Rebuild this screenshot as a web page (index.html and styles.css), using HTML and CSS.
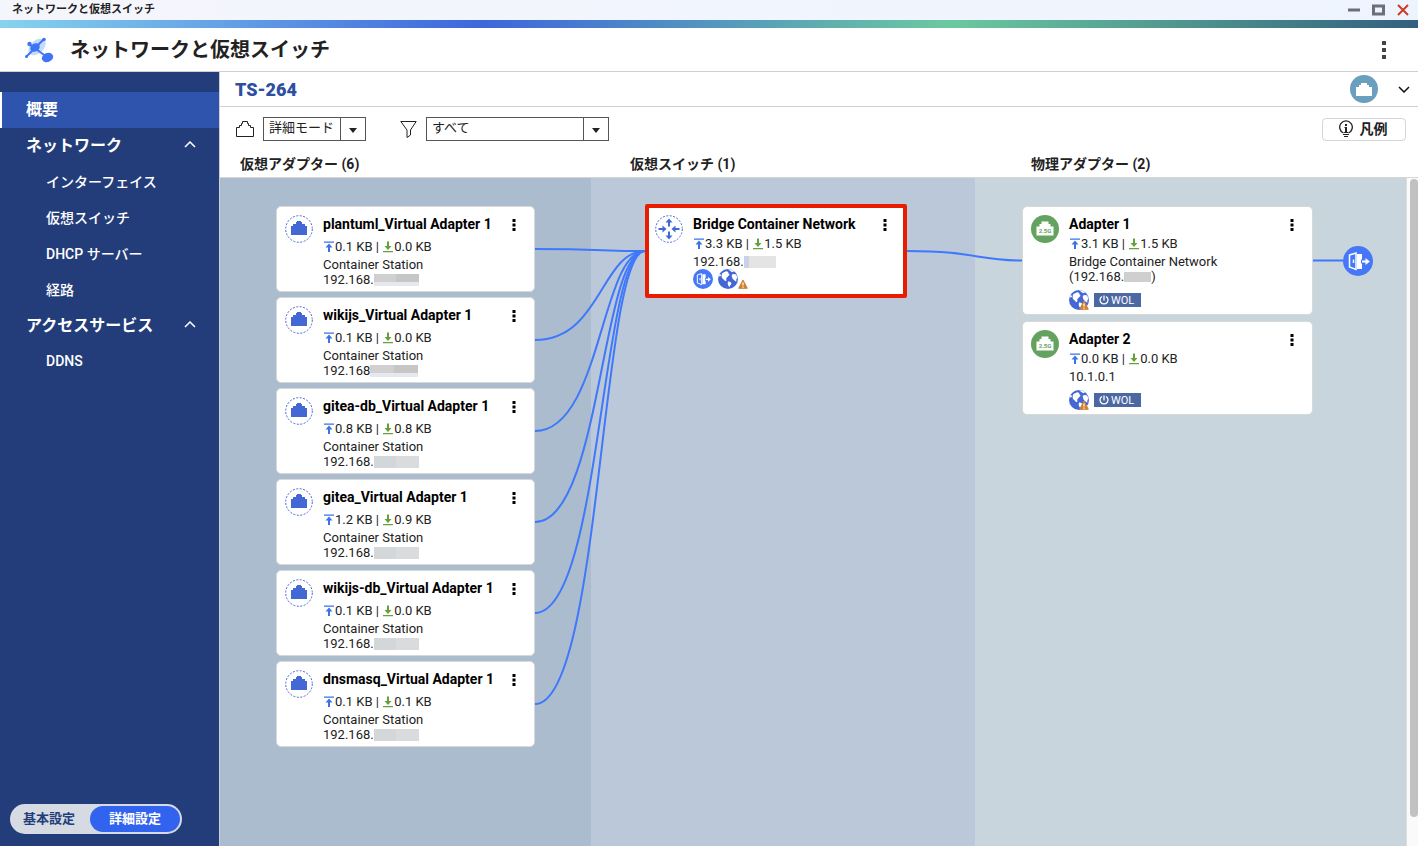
FILE: index.html
```html
<!DOCTYPE html>
<html lang="ja">
<head>
    <meta charset="UTF-8">
    <meta name="viewport" content="width=device-width, initial-scale=1.0">
    <title>ネットワークと仮想スイッチ</title>
    <link rel="stylesheet" href="styles.css">
</head>
<body>
    <svg class="sprite" aria-hidden="true">
        <symbol id="port" viewBox="0 0 18 15"><path d="M1 14V5h3V3h2V1h6v2h2v2h3v9z"/></symbol>
        <symbol id="virtual" viewBox="0 0 28 28">
            <circle cx="14" cy="14" r="13.3" fill="none" stroke="#4467d6" stroke-dasharray="2 1.5"/>
            <path d="M6 20v-9h2V9h3V7h1V6h4v1h1v2h3v2h2v9z" fill="#4467d6"/>
        </symbol>
        <symbol id="switch" viewBox="0 0 28 28">
            <circle cx="14" cy="14" r="13.3" fill="none" stroke="#4467d6" stroke-dasharray="2 1.5"/>
            <g fill="#4467d6">
                <path d="M14 3.500l3.500 4H15V11.500h-2V7.500h-2.500z"/>
                <path d="M14 24.500l3.500-4H15V16.500h-2v4h-2.500z"/>
                <path d="M11.500 14L7.500 10.500V13h-4v2h4v2.500z"/>
                <path d="M16.500 14l4-3.500V13h4v2h-4v2.500z"/>
            </g>
        </symbol>
        <symbol id="physical" viewBox="0 0 28 28">
            <circle cx="14" cy="14" r="14" fill="#64a35f"/>
            <path d="M5.500 20.500v-9h3v-2.500h2V6.500h7V9h2v2.500h3v9z" fill="#fff"/>
            <text x="14" y="18" text-anchor="middle" class="speed">2.5G</text>
        </symbol>
        <symbol id="up" viewBox="0 0 12 12"><path d="M1 .5h10v1.300H1z M6 2.500L9.500 6.500H7V11H5V6.500H2.500z" fill="#3a72e8"/></symbol>
        <symbol id="down" viewBox="0 0 12 12"><path d="M1 10h10v1.300H1z M6 9L9.500 5H7V.5H5V5H2.500z" fill="#64a03c"/></symbol>
        <symbol id="dots" viewBox="0 0 4 12"><path d="M.5 0h3v3h-3z M.5 4.500h3v3h-3z M.5 9h3v3h-3z"/></symbol>
        <symbol id="gateway" viewBox="0 0 30 30">
            <circle cx="15" cy="15" r="15" fill="#4577f8"/>
            <path d="M6.500 9L13 7v16.500L6.500 21z" fill="none" stroke="#fff" stroke-width="1.500"/>
            <path d="M10.500 13.500v3.500" stroke="#fff" stroke-width="1.500"/>
            <path d="M14 8h5v5.500h-1v4h1V23h-5z" fill="#fff"/>
            <path d="M19 14.600h3.500V12l4.300 3.500-4.300 3.500v-2.600H19z" fill="#fff"/>
        </symbol>
        <symbol id="globe" viewBox="0 0 20 20">
            <circle cx="10" cy="10" r="10" fill="#4467d6"/>
            <path d="M4 4.500C5.500 3 6.500 3.200 7.500 2.500 9 2 10.500 3 10.500 4.500c1.500.5 1 2-.3 2.500C9.800 8.500 8.500 8 8.300 9.500 8 11 9 11.500 8 12 6.500 12.300 6 10.500 4.500 9.500 3.300 8.500 3.500 6.500 4 4.500z" fill="#fff"/>
            <path d="M10 .300c2.500 0 4.500.8 6 2.200l-1.800.7L12 1.800z M14 5.500c1.500-1 3-.5 4.200 0L19.500 9c-1.200.3-1.500 2-1 3.500-1.500 0-2-1.500-3.200-2-1-1.300-2-3.500-1.300-5z M10 12.500c1.500-.3 3 .5 3.500 2-.5 1.500-1.800 2-2 3.500-1.500-1-2.200-3.500-1.500-5.500z" fill="#fff"/>
            <path d="M.5 7.500L3 7l-.3-1.500L1.500 5z" fill="#fff"/>
        </symbol>
        <symbol id="warn" viewBox="0 0 10 10">
            <path d="M5 1L9.300 9.300H.7z" fill="#d08030" stroke="#d08030" stroke-linejoin="round"/>
            <path d="M5 3.500v3M5 7.500v1.200" stroke="#fff" stroke-width="1.200"/>
        </symbol>
        <symbol id="power" viewBox="0 0 10 10"><path d="M3 1.500a4 4 0 1 0 4 0M5 .5v5" fill="none" stroke="#fff" stroke-width="1.300"/></symbol>
    </svg>

    <div class="titlebar">
        <span>ネットワークと仮想スイッチ</span>
        <div class="window-buttons">
            <button aria-label="最小化"><svg width="12" height="12"><path d="M0 4.500h12v3H0z" fill="#6b6f7b"/></svg></button>
            <button aria-label="最大化"><svg width="13" height="12"><path d="M1.500 2h10v8h-10z" fill="none" stroke="#6b6f7b" stroke-width="3"/></svg></button>
            <button aria-label="閉じる"><svg width="12" height="12"><path d="M1 1l10 10M11 1L1 11" stroke="#cf3a26" stroke-width="2"/></svg></button>
        </div>
    </div>
    <div class="rainbow"></div>

    <header class="app-header">
        <svg class="logo" width="30" height="26" viewBox="0 0 30 26">
            <ellipse cx="13" cy="10" rx="10" ry="6.500" transform="rotate(-42 13 10)" fill="#c3dcfb"/>
            <path d="M2 20L20 2M5 7l18 13" stroke="#3f75f5" stroke-width="2"/>
            <ellipse cx="11" cy="10.500" rx="5" ry="4" transform="rotate(-30 11 10.500)" fill="#3f75f5"/>
            <circle cx="5.500" cy="7" r="2.200" fill="#3f75f5"/>
            <circle cx="20" cy="2.500" r="1.800" fill="#3f75f5"/>
            <circle cx="2.500" cy="19.500" r="1.500" fill="#3f75f5"/>
            <ellipse cx="23.500" cy="20.500" rx="5.800" ry="4.500" transform="rotate(-20 23.500 20.500)" fill="#3f75f5"/>
        </svg>
        <h1>ネットワークと仮想スイッチ</h1>
        <button class="app-menu" aria-label="メニュー"><svg width="4" height="18" viewBox="0 0 4 18"><path d="M0 0h4v4H0z M0 7h4v4H0z M0 14h4v4H0z"/></svg></button>
    </header>

    <div class="layout">
        <aside class="sidebar">
            <nav>
                <a class="group active" href="#">概要</a>
                <a class="group" href="#">ネットワーク<svg width="12" height="7"><path d="M1 6l5-5 5 5"/></svg></a>
                <a class="item" href="#">インターフェイス</a>
                <a class="item" href="#">仮想スイッチ</a>
                <a class="item" href="#">DHCP サーバー</a>
                <a class="item" href="#">経路</a>
                <a class="group" href="#">アクセスサービス<svg width="12" height="7"><path d="M1 6l5-5 5 5"/></svg></a>
                <a class="item" href="#">DDNS</a>
            </nav>
            <div class="mode">
                <button>基本設定</button>
                <button class="on">詳細設定</button>
            </div>
        </aside>

        <main>
            <div class="device">
                <h2>TS-264</h2>
                <span class="device-port"><svg width="18" height="15"><use href="#port"/></svg></span>
                <button aria-label="展開"><svg width="12" height="7"><path d="M1 1l5 5 5-5" fill="none" stroke="#111" stroke-width="1.500"/></svg></button>
            </div>

            <div class="toolbar">
                <label for="viewMode" aria-label="表示モード"><svg class="line-icon" width="18" height="17" viewBox="0 0 18 17"><path d="M.5 15.500v-9h3v-2h2v-2h1v-2h5v2h1v2h2v2h3v9z"/></svg></label>
                <div class="select select-mode">
                    <select id="viewMode"><option>詳細モード</option></select>
                </div>
                <label class="filter" for="filter" aria-label="フィルター"><svg class="line-icon" width="17" height="17" viewBox="0 0 17 17"><path d="M.8.500h15.400L10.500 9v5l-3.500 2.500V9z"/></svg></label>
                <div class="select select-filter">
                    <select id="filter"><option>すべて</option></select>
                </div>
                <button class="legend">
                    <svg width="14" height="18" viewBox="0 0 14 18">
                        <path d="M4.500 13A6.300 6.300 0 1 1 9.500 13" fill="none" stroke="#222" stroke-width="1.300"/>
                        <path d="M6 7h2v5h1v1H5v-1h1V8H5z M6 4h2v2H6z M4 14h6v1H4z M5 16h4v1H5z" fill="#222"/>
                    </svg>
                    <span>凡例</span>
                </button>
            </div>

            <div class="columns heads">
                <h3>仮想アダプター (6)</h3>
                <h3>仮想スイッチ (1)</h3>
                <h3>物理アダプター (2)</h3>
            </div>

            <div class="board">
                <div class="columns map" id="map">
                    <section class="col adapters">
                        <article class="card" data-to="bridge">
                            <svg class="badge"><use href="#virtual"/></svg>
                            <div class="info">
                                <h4>plantuml_Virtual Adapter 1</h4>
                                <p class="rate"><svg><use href="#up"/></svg>0.1 KB | <svg><use href="#down"/></svg>0.0 KB</p>
                                <p>Container Station</p>
                                <p>192.168.<span class="mask"></span></p>
                            </div>
                            <button class="more" aria-label="操作"><svg><use href="#dots"/></svg></button>
                        </article>
                        <article class="card" data-to="bridge">
                            <svg class="badge"><use href="#virtual"/></svg>
                            <div class="info">
                                <h4>wikijs_Virtual Adapter 1</h4>
                                <p class="rate"><svg><use href="#up"/></svg>0.1 KB | <svg><use href="#down"/></svg>0.0 KB</p>
                                <p>Container Station</p>
                                <p>192.168<span class="mask wide"></span></p>
                            </div>
                            <button class="more" aria-label="操作"><svg><use href="#dots"/></svg></button>
                        </article>
                        <article class="card" data-to="bridge">
                            <svg class="badge"><use href="#virtual"/></svg>
                            <div class="info">
                                <h4>gitea-db_Virtual Adapter 1</h4>
                                <p class="rate"><svg><use href="#up"/></svg>0.8 KB | <svg><use href="#down"/></svg>0.8 KB</p>
                                <p>Container Station</p>
                                <p>192.168.<span class="mask flat"></span></p>
                            </div>
                            <button class="more" aria-label="操作"><svg><use href="#dots"/></svg></button>
                        </article>
                        <article class="card" data-to="bridge">
                            <svg class="badge"><use href="#virtual"/></svg>
                            <div class="info">
                                <h4>gitea_Virtual Adapter 1</h4>
                                <p class="rate"><svg><use href="#up"/></svg>1.2 KB | <svg><use href="#down"/></svg>0.9 KB</p>
                                <p>Container Station</p>
                                <p>192.168.<span class="mask flat"></span></p>
                            </div>
                            <button class="more" aria-label="操作"><svg><use href="#dots"/></svg></button>
                        </article>
                        <article class="card" data-to="bridge">
                            <svg class="badge"><use href="#virtual"/></svg>
                            <div class="info">
                                <h4>wikijs-db_Virtual Adapter 1</h4>
                                <p class="rate"><svg><use href="#up"/></svg>0.1 KB | <svg><use href="#down"/></svg>0.0 KB</p>
                                <p>Container Station</p>
                                <p>192.168.<span class="mask flat"></span></p>
                            </div>
                            <button class="more" aria-label="操作"><svg><use href="#dots"/></svg></button>
                        </article>
                        <article class="card" data-to="bridge">
                            <svg class="badge"><use href="#virtual"/></svg>
                            <div class="info">
                                <h4>dnsmasq_Virtual Adapter 1</h4>
                                <p class="rate"><svg><use href="#up"/></svg>0.1 KB | <svg><use href="#down"/></svg>0.1 KB</p>
                                <p>Container Station</p>
                                <p>192.168.<span class="mask flat"></span></p>
                            </div>
                            <button class="more" aria-label="操作"><svg><use href="#dots"/></svg></button>
                        </article>
                    </section>

                    <section class="col switches">
                        <article class="card selected" id="bridge" data-to="adapter1">
                            <svg class="badge"><use href="#switch"/></svg>
                            <div class="info">
                                <h4>Bridge Container Network</h4>
                                <p class="rate"><svg><use href="#up"/></svg>3.3 KB | <svg><use href="#down"/></svg>1.5 KB</p>
                                <p>192.168.<span class="mask pale"></span></p>
                                <div class="status">
                                    <svg class="round"><use href="#gateway"/></svg>
                                    <svg class="round"><use href="#globe"/></svg>
                                    <svg class="warn"><use href="#warn"/></svg>
                                </div>
                            </div>
                            <button class="more" aria-label="操作"><svg><use href="#dots"/></svg></button>
                        </article>
                    </section>

                    <section class="col physical">
                        <div class="row">
                            <article class="card" id="adapter1" data-to="gateway1">
                                <svg class="badge"><use href="#physical"/></svg>
                                <div class="info">
                                    <h4>Adapter 1</h4>
                                    <p class="rate"><svg><use href="#up"/></svg>3.1 KB | <svg><use href="#down"/></svg>1.5 KB</p>
                                    <p>Bridge Container Network</p>
                                    <p>(192.168.<span class="mask short"></span>)</p>
                                    <div class="status">
                                        <span class="net"><svg class="round"><use href="#globe"/></svg><svg class="warn"><use href="#warn"/></svg></span>
                                        <span class="wol"><svg><use href="#power"/></svg>WOL</span>
                                    </div>
                                </div>
                                <button class="more" aria-label="操作"><svg><use href="#dots"/></svg></button>
                            </article>
                            <svg class="gateway" id="gateway1"><use href="#gateway"/></svg>
                        </div>
                        <div class="row">
                            <article class="card">
                                <svg class="badge"><use href="#physical"/></svg>
                                <div class="info">
                                    <h4>Adapter 2</h4>
                                    <p class="rate"><svg><use href="#up"/></svg>0.0 KB | <svg><use href="#down"/></svg>0.0 KB</p>
                                    <p>10.1.0.1</p>
                                    <div class="status">
                                        <span class="net"><svg class="round"><use href="#globe"/></svg><svg class="warn"><use href="#warn"/></svg></span>
                                        <span class="wol"><svg><use href="#power"/></svg>WOL</span>
                                    </div>
                                </div>
                                <button class="more" aria-label="操作"><svg><use href="#dots"/></svg></button>
                            </article>
                        </div>
                    </section>
                    <svg class="wires" id="wires"></svg>
                </div>
                <div class="scrollbar"><div class="thumb"></div></div>
            </div>
        </main>
    </div>

    <script>
        const map = document.getElementById('map');
        const wires = document.getElementById('wires');

        // Connect every card to the element named in its data-to attribute
        function drawWires() {
            const base = map.getBoundingClientRect();
            let paths = '';
            map.querySelectorAll('[data-to]').forEach(card => {
                const a = card.getBoundingClientRect();
                const b = document.getElementById(card.dataset.to).getBoundingClientRect();
                const x1 = a.right - base.left;
                const y1 = a.top + a.height / 2 - base.top;
                const x2 = b.left - base.left;
                const y2 = b.top + b.height / 2 - base.top;
                const bend = x1 + (x2 - x1) * 0.6;
                paths += `<path d="M${x1} ${y1}C${bend} ${y1} ${bend} ${y2} ${x2} ${y2}"/>`;
            });
            wires.innerHTML = paths;
        }

        drawWires();
        window.addEventListener('resize', drawWires);
    </script>
</body>
</html>
```

FILE: styles.css
```css
* {
    box-sizing: border-box;
}

body {
    margin: 0;
    height: 100vh;
    display: flex;
    flex-direction: column;
    font-family: Roboto, "Noto Sans CJK JP", sans-serif;
    font-size: 13px;
    color: #222;
    background: #fff;
    overflow: hidden;
}

h1, h2, h3, h4, p {
    margin: 0;
}

button {
    padding: 0;
    border: none;
    background: none;
    font: inherit;
    color: inherit;
    cursor: pointer;
}

svg {
    display: block;
    flex: none;
}

a {
    color: inherit;
    text-decoration: none;
}

.sprite {
    display: none;
}

/* Window frame */
.titlebar {
    flex: none;
    display: flex;
    justify-content: space-between;
    align-items: center;
    height: 20px;
    padding: 0 9px 0 12px;
    background: linear-gradient(90deg, #f5f6fc, #eef4fe);
    font-size: 11px;
    font-weight: 700;
    line-height: 18px;
}

.window-buttons {
    display: flex;
    gap: 12px;
}

.rainbow {
    flex: none;
    height: 8px;
    background: linear-gradient(90deg, #86d3ee, #3d66dc 34%, #6bc99f 67%, #33607f);
}

.app-header {
    flex: none;
    display: flex;
    align-items: center;
    height: 44px;
    padding: 1px 32px 0 24px;
    border-bottom: 1px solid #d0d0d2;
}

.app-header h1 {
    margin-left: 16px;
    font-size: 20px;
    font-weight: 700;
    line-height: 28px;
}

.app-menu {
    margin-left: auto;
    fill: #444;
}

.layout {
    flex: 1;
    display: flex;
    min-height: 0;
}

/* Sidebar */
.sidebar {
    flex: none;
    display: flex;
    flex-direction: column;
    justify-content: space-between;
    width: 220px;
    padding: 20px 0 12px;
    border-right: 1px solid #d0d0d2;
    background: #233d7a;
    color: #fff;
}

.sidebar a {
    display: flex;
    align-items: center;
    justify-content: space-between;
    height: 36px;
    font-size: 14px;
}

.sidebar .group {
    padding: 0 23px 4px 26px;
    font-size: 16px;
    font-weight: 700;
}

.sidebar .item {
    padding: 0 0 2px 46px;
    font-weight: 500;
}

.sidebar .active {
    padding-left: 24px;
    border-left: 2px solid #fff;
    background: #2f54ad;
}

.sidebar a svg {
    fill: none;
    stroke: #fff;
    stroke-width: 1.5;
}

.mode {
    display: flex;
    width: 172px;
    height: 30px;
    margin-left: 10px;
    padding: 2px;
    border-radius: 15px;
    background: #d5dae3;
}

.mode button {
    flex: 1;
    padding: 0 4px 4px 0;
    border-radius: 13px;
    font-weight: 700;
    color: #233d7a;
}

.mode .on {
    flex: none;
    width: 90px;
    padding-right: 0;
    background: #3263ef;
    color: #fff;
}

/* Main area */
main {
    flex: 1;
    display: flex;
    flex-direction: column;
    min-width: 0;
}

.device {
    display: flex;
    align-items: center;
    height: 35px;
    padding: 0 8px 0 15px;
    border-bottom: 1px solid #d0d0d2;
}

.device h2 {
    margin-right: auto;
    font-size: 18px;
    font-weight: 900;
    color: #2d4f9e;
}

.device-port {
    display: flex;
    align-items: center;
    justify-content: center;
    width: 28px;
    height: 28px;
    margin-right: 20px;
    border-radius: 50%;
    background: #6a9fbd;
    fill: #fff;
}

.toolbar {
    display: flex;
    align-items: center;
    height: 44px;
    padding: 0 12px 0 16px;
}

.line-icon {
    fill: none;
    stroke: #222;
}

.select {
    position: relative;
    margin-left: 9px;
}

.select select {
    appearance: none;
    display: block;
    width: 100%;
    height: 24px;
    padding: 0 5px 3px;
    border: 1px solid #555;
    border-radius: 0;
    background: #fff;
    font: inherit;
    font-size: 13px;
    color: #222;
}

.select::before {
    content: "";
    position: absolute;
    top: 0;
    right: 25px;
    height: 24px;
    border-left: 1px solid #555;
}

.select::after {
    content: "";
    position: absolute;
    top: 11px;
    right: 9px;
    border: 4px solid transparent;
    border-top: 5px solid #222;
    border-bottom: none;
}

.select-mode {
    width: 103px;
}

.select-filter {
    width: 183px;
}

.filter {
    margin-left: 34px;
}

.legend {
    display: flex;
    align-items: center;
    justify-content: center;
    gap: 7px;
    width: 84px;
    height: 23px;
    margin-left: auto;
    padding-right: 2px;
    border: 1px solid #d5d5dc;
    border-radius: 4px;
    font-size: 14px;
    font-weight: 700;
}

.legend span {
    padding-bottom: 3px;
}

.columns {
    display: grid;
    grid-template-columns: 371fr 384fr 431fr;
}

.heads {
    height: 27px;
    padding-right: 12px;
    border-bottom: 1px solid #d5d5d5;
}

.heads h3 {
    padding-left: 20px;
    font-size: 14px;
    font-weight: 700;
    line-height: 26px;
}

.heads h3:nth-child(2) {
    padding-left: 39px;
}

.heads h3:nth-child(3) {
    padding-left: 56px;
}

.board {
    flex: 1;
    display: flex;
    min-height: 0;
}

.map {
    position: relative;
    flex: 1;
}

.col {
    display: flex;
    flex-direction: column;
    align-items: flex-start;
    gap: 5px;
    padding-top: 28px;
}

.adapters {
    padding-left: 56px;
    background: #abbccf;
}

.switches {
    padding: 26px 0 0 54px;
    background: #bbc8d9;
}

.physical {
    gap: 6px;
    padding-left: 47px;
    background: #c8d5dc;
}

.row {
    display: flex;
    align-items: center;
    gap: 30px;
}

.wires {
    position: absolute;
    inset: 0;
    width: 100%;
    height: 100%;
    fill: none;
    stroke: #3f78fa;
    stroke-width: 2;
    pointer-events: none;
}

/* Cards */
.card {
    position: relative;
    z-index: 1;
    display: flex;
    gap: 10px;
    width: 259px;
    padding: 7px 18px 4px 8px;
    border: 1px solid #d8d8d8;
    border-radius: 5px;
    background: #fff;
}

.badge {
    width: 28px;
    height: 28px;
    margin-top: 1px;
}

.info {
    flex: 1;
    min-width: 0;
    line-height: 15px;
    white-space: nowrap;
}

.info h4 {
    font-size: 14px;
    font-weight: 700;
    line-height: 20px;
    color: #000;
}

.rate {
    display: flex;
    align-items: center;
    margin: 1px 0;
    line-height: 18px;
    white-space: pre;
}

.adapters .rate {
    margin-top: 4px;
}

.rate svg {
    width: 12px;
    height: 12px;
}

.more {
    width: 4px;
    height: 12px;
    margin-top: 5px;
}

.more svg {
    width: 4px;
    height: 12px;
}

.selected {
    width: 262px;
    padding: 6px 16px 5px 6px;
    border: 4px solid #e81c00;
    border-radius: 2px;
}

.physical .card {
    width: 291px;
}

.mask {
    display: inline-block;
    width: 45px;
    height: 12px;
    vertical-align: -2px;
    background: linear-gradient(90deg, #d0d0d0 50%, #c6c6c6 50%) top / 100% 8px no-repeat #e5e8ef;
}

.mask.wide {
    width: 48px;
}

.mask.flat {
    background: linear-gradient(90deg, #d4d7d9 50%, #dadbdc 50%);
}

.mask.pale {
    width: 32px;
    background: linear-gradient(90deg, #ccd0e8 5px, #e4e4e4 5px);
}

.mask.short {
    width: 27px;
    height: 10px;
    vertical-align: -1px;
    background: #cfcfcf;
}

.status {
    display: flex;
    align-items: center;
    gap: 5px;
}

.physical .status {
    margin-top: 6px;
}

.round {
    width: 20px;
    height: 20px;
}

.warn {
    width: 10px;
    height: 10px;
    align-self: flex-end;
}

.net {
    position: relative;
}

.net .warn {
    position: absolute;
    right: 0;
    bottom: 0;
}

.selected .warn {
    margin-left: -5px;
}

.wol {
    display: flex;
    align-items: center;
    gap: 2px;
    height: 14px;
    padding: 0 7px 0 5px;
    background: #4c68a3;
    font-size: 11px;
    color: #fff;
}

.wol svg {
    width: 10px;
    height: 10px;
}

.speed {
    font: 700 6px Roboto, sans-serif;
    fill: #64a35f;
}

.gateway {
    width: 30px;
    height: 30px;
}

.scrollbar {
    flex: none;
    width: 12px;
    padding: 1px 0 29px 3px;
    border-left: 1px solid #ddd;
    background: #fafafa;
}

.thumb {
    height: 100%;
    border-radius: 4px;
    background: #c1c1c1;
}
```
